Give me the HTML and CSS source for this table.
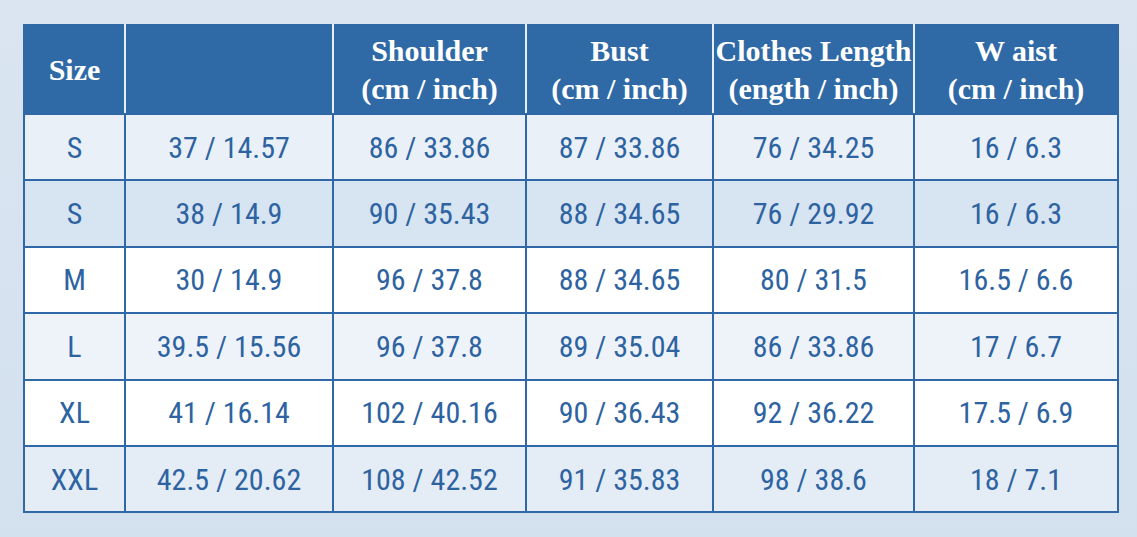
FILE: index.html
```html
<!DOCTYPE html>
<html>
<head>
<meta charset="utf-8">
<link rel="stylesheet" href="styles.css">
</head>
<body>
<div class="page">
<table class="chart">
<colgroup>
<col class="c1"><col class="c2"><col class="c3"><col class="c4"><col class="c5"><col class="c6">
</colgroup>
<thead>
<tr><th>Size</th><th></th><th>Shoulder<br>(cm / inch)</th><th>Bust<br>(cm / inch)</th><th>Clothes Length<br>(ength / inch)</th><th>W aist<br>(cm / inch)</th></tr>
</thead>
<tbody>
<tr class="r1"><td>S</td><td>37 / 14.57</td><td>86 / 33.86</td><td>87 / 33.86</td><td>76 / 34.25</td><td>16 / 6.3</td></tr>
<tr class="r2"><td>S</td><td>38 / 14.9</td><td>90 / 35.43</td><td>88 / 34.65</td><td>76 / 29.92</td><td>16 / 6.3</td></tr>
<tr class="r3"><td>M</td><td>30 / 14.9</td><td>96 / 37.8</td><td>88 / 34.65</td><td>80 / 31.5</td><td>16.5 / 6.6</td></tr>
<tr class="r4"><td>L</td><td>39.5 / 15.56</td><td>96 / 37.8</td><td>89 / 35.04</td><td>86 / 33.86</td><td>17 / 6.7</td></tr>
<tr class="r5"><td>XL</td><td>41 / 16.14</td><td>102 / 40.16</td><td>90 / 36.43</td><td>92 / 36.22</td><td>17.5 / 6.9</td></tr>
<tr class="r6"><td>XXL</td><td>42.5 / 20.62</td><td>108 / 42.52</td><td>91 / 35.83</td><td>98 / 38.6</td><td>18 / 7.1</td></tr>
</tbody>
</table>
</div>
</body>
</html>
```
FILE: styles.css
```css
html, body { margin: 0; padding: 0; }
body {
  width: 1137px; height: 537px; overflow: hidden;
  background: linear-gradient(180deg, #dae5f1 0%, #d3e0ee 100%);
}
.page { padding: 24px 0 0 23px; }
.chart {
  border-collapse: collapse;
  table-layout: fixed;
  width: 1094px;
  border: 2px solid #2f67a7;
}
.c1 { width: 101px; } .c2 { width: 208px; } .c3 { width: 193px; }
.c4 { width: 187px; } .c5 { width: 201px; } .c6 { width: 204px; }
th {
  background: #306aa6;
  color: #fff;
  font-family: "Liberation Serif", serif;
  font-weight: bold;
  font-size: 30px;
  line-height: 38px;
  height: 87px;
  padding: 0;
  border-left: 2px solid #e6eef7;
  border-bottom: 2px solid #2f67a7;
  white-space: nowrap;
}
th:first-child { border-left: none; }
td {
  height: 64.4px;
  padding: 0;
  text-align: center;
  color: #2e63a1;
  font-family: "Liberation Sans Narrow", "Roboto Condensed", Roboto, sans-serif;
  font-size: 30px;
  border: 2px solid #2f67a7;
}
.r1 td { background: #e9f0f8; }
.r2 td { background: #d7e4f1; }
.r3 td { background: #ffffff; }
.r4 td { background: #eef3fa; }
.r5 td { background: #ffffff; }
.r6 td { background: #e4ecf6; }
```
